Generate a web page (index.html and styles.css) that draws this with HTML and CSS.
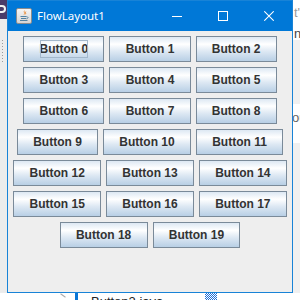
FILE: index.html
```html
<!DOCTYPE html>
<html>
<head>
<meta charset="utf-8">
<link rel="stylesheet" href="styles.css">
</head>
<body>
<div class="desktop">
  <div class="behind-left">
    <div class="gear-tile"><span class="gear"></span></div>
    <div class="grip"></div>
  </div>
  <div class="behind-right">
    <span class="frag frag-t">t'</span>
    <span class="frag frag-n">n</span>
    <span class="frag frag-ou">ou</span>
  </div>
  <div class="behind-bottom">
    <span class="tree-line"></span>
    <span class="tab-bar"></span>
    <span class="file-name">Button2.java</span>
    <span class="dither"></span>
  </div>

  <div class="window">
    <div class="titlebar">
      <svg class="app-icon" width="16" height="16" viewBox="0 0 16 16">
        <defs>
          <linearGradient id="ig" x1="0" y1="0" x2="0" y2="1">
            <stop offset="0" stop-color="#f6f6f6"/>
            <stop offset="1" stop-color="#d4d4d4"/>
          </linearGradient>
        </defs>
        <rect x="0.5" y="0.5" width="15" height="15" rx="1.5" fill="url(#ig)" stroke="#8c8c8c"/>
        <path d="M8.6 2 C6.4 4 9.6 4.8 7.4 7.2 C10.2 5.6 7.6 4.4 8.6 2 Z" fill="#e76f00"/>
        <path d="M9.8 3.6 C8.8 4.6 10.4 5.2 9.2 6.4" fill="none" stroke="#e76f00" stroke-width="0.8"/>
        <path d="M4.5 8.5 H10.5 M5 10.5 H10 M4 12.5 H11.5" stroke="#5382a1" stroke-width="1" fill="none"/>
        <path d="M10.5 8.7 C12.6 8.7 12.6 10.6 10.3 10.8" stroke="#5382a1" stroke-width="0.9" fill="none"/>
      </svg>
      <span class="title">FlowLayout1</span>
      <div class="caption">
        <span class="cap-btn">
          <svg width="10" height="10" viewBox="0 0 10 10"><path d="M0 5.5 H10" stroke="#fff" stroke-width="1" shape-rendering="crispEdges"/></svg>
        </span>
        <span class="cap-btn">
          <svg width="10" height="10" viewBox="0 0 10 10"><rect x="0.5" y="0.5" width="9" height="9" fill="none" stroke="#fff" stroke-width="1" shape-rendering="crispEdges"/></svg>
        </span>
        <span class="cap-btn">
          <svg width="10" height="10" viewBox="0 0 10 10"><path d="M0.3 0.3 L9.7 9.7 M9.7 0.3 L0.3 9.7" stroke="#fff" stroke-width="1.05"/></svg>
        </span>
      </div>
    </div>
    <div class="content">
      <button class="jbtn"><span class="focus">Button 0</span></button>
      <button class="jbtn">Button 1</button>
      <button class="jbtn">Button 2</button>
      <button class="jbtn">Button 3</button>
      <button class="jbtn">Button 4</button>
      <button class="jbtn">Button 5</button>
      <button class="jbtn">Button 6</button>
      <button class="jbtn">Button 7</button>
      <button class="jbtn">Button 8</button>
      <button class="jbtn">Button 9</button>
      <button class="jbtn">Button 10</button>
      <button class="jbtn">Button 11</button>
      <button class="jbtn">Button 12</button>
      <button class="jbtn">Button 13</button>
      <button class="jbtn">Button 14</button>
      <button class="jbtn">Button 15</button>
      <button class="jbtn">Button 16</button>
      <button class="jbtn">Button 17</button>
      <button class="jbtn">Button 18</button>
      <button class="jbtn">Button 19</button>
    </div>
  </div>
</div>
</body>
</html>
```

FILE: styles.css
```css
html, body {
  margin: 0;
  padding: 0;
}

.desktop {
  position: relative;
  width: 300px;
  height: 300px;
  overflow: hidden;
  background: #ffffff;
  font-family: "Liberation Sans", Arial, sans-serif;
}

/* content of the IDE window behind */
.behind-left {
  position: absolute;
  left: 0;
  top: 0;
  width: 7px;
  height: 300px;
  background: #ececec;
}

.gear-tile {
  height: 19px;
  background: #4a3b6a;
  position: relative;
}

.gear {
  position: absolute;
  left: 0;
  top: 5px;
  width: 6px;
  height: 8px;
  border: 2px solid #f2f2f2;
  border-left: none;
  border-radius: 0 5px 5px 0;
  box-sizing: border-box;
}

.grip {
  position: absolute;
  left: 2px;
  top: 40px;
  width: 1px;
  height: 24px;
  background: repeating-linear-gradient(to bottom, #9c9c9c 0 1px, transparent 1px 3px);
}

.behind-right {
  position: absolute;
  left: 293px;
  top: 0;
  width: 7px;
  height: 300px;
  background: linear-gradient(to bottom, #ffffff 0 40px, #f0f0f0 40px 104px, #ffffff 104px 143px, #f0f0f0 143px);
}

.frag {
  position: absolute;
  font-size: 13px;
  line-height: 13px;
  color: #9a9a9a;
}

.frag-t { left: 1px; top: 6px; }
.frag-n { left: 1px; top: 27px; color: #444; }
.frag-ou { left: -1px; top: 111px; color: #666; }

.behind-bottom {
  position: absolute;
  left: 0;
  top: 293px;
  width: 300px;
  height: 7px;
  background: #ffffff;
}

.tree-line {
  position: absolute;
  left: 60px;
  top: 2px;
  width: 6px;
  height: 1px;
  background: #aaaaaa;
  transform: rotate(35deg);
}

.tab-bar {
  position: absolute;
  left: 75px;
  top: 0;
  width: 3px;
  height: 7px;
  background: #0a76d6;
}

.file-name {
  position: absolute;
  left: 91px;
  top: 2px;
  font-size: 13px;
  line-height: 13px;
  color: #222;
}

.dither {
  position: absolute;
  left: 205px;
  top: 0;
  width: 12px;
  height: 7px;
  background: repeating-conic-gradient(#1e6fd8 0 25%, #ffffff 0 50%) 0 0 / 2px 2px;
}

/* the FlowLayout1 frame */
.window {
  position: absolute;
  left: 7px;
  top: 0;
  width: 286px;
  height: 293px;
  box-sizing: border-box;
  border: 1px solid #1883d7;
  display: flex;
  flex-direction: column;
  background: #eeeeee;
}

.titlebar {
  height: 30px;
  flex: none;
  background: #0078d7;
  display: flex;
  align-items: center;
  color: #ffffff;
}

.app-icon {
  margin-left: 8px;
  flex: none;
}

.title {
  margin-left: 5px;
  font-family: "Noto Sans", "Open Sans", sans-serif;
  font-size: 11.5px;
  line-height: 30px;
  color: #ffffff;
}

.caption {
  margin-left: auto;
  display: flex;
  height: 30px;
}

.cap-btn {
  width: 46px;
  height: 30px;
  display: flex;
  align-items: center;
  justify-content: center;
}

.cap-btn svg {
  display: block;
}

.content {
  flex: 1;
  display: flex;
  flex-wrap: wrap;
  justify-content: center;
  align-content: flex-start;
  gap: 5px;
  padding: 5px;
  background: #eeeeee;
}

.jbtn {
  height: 26px;
  box-sizing: border-box;
  margin: 0;
  padding: 0 15.25px;
  border: 1px solid #7a8a99;
  border-radius: 0;
  background: linear-gradient(to bottom, #dde8f3 0%, #ffffff 30%, #dde8f3 60%, #b8cfe5 100%);
  font-family: "Liberation Sans", Arial, sans-serif;
  font-weight: bold;
  font-size: 12px;
  line-height: 24px;
  color: #333333;
  white-space: nowrap;
}

.focus {
  padding: 2px 0;
  outline: 1px solid #a3b8cc;
  outline-offset: -1px;
}
```
